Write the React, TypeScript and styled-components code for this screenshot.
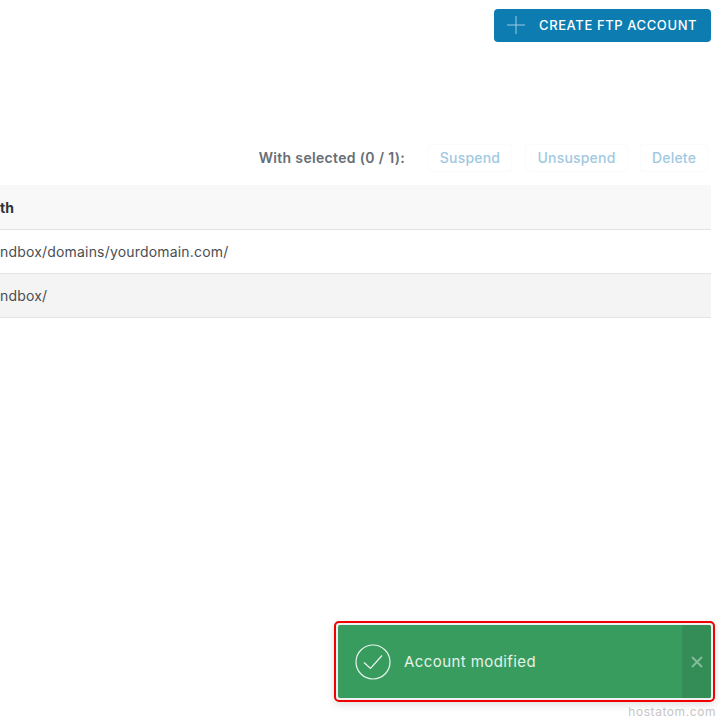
import React from "react";
import styled, { createGlobalStyle } from "styled-components";

const Global = createGlobalStyle`
  html, body { margin: 0; padding: 0; background: #fff; overflow: hidden; }
  body { font-family: Inter, "Noto Sans", "Liberation Sans", sans-serif; }
`;

const Page = styled.div`
  width: 720px;
  height: 719px;
  box-sizing: border-box;
  padding: 9px 9px 0 0;
  display: flex;
  flex-direction: column;
  overflow: hidden;
  position: relative;
`;

const TopBar = styled.div`
  display: flex;
  justify-content: flex-end;
  height: 33px;
`;

const CreateButton = styled.button`
  width: 217px;
  height: 33px;
  box-sizing: border-box;
  border: 0;
  border-radius: 4px;
  background: #0d7cb1;
  color: #fff;
  display: flex;
  align-items: center;
  padding: 0 0 1px 13px;
  gap: 14px;
  font: 500 13px Inter, sans-serif;
  letter-spacing: 0.6px;
  white-space: nowrap;
`;

const SelectionBar = styled.div`
  margin-top: 102px;
  height: 28px;
  display: flex;
  justify-content: flex-end;
  align-items: center;
  padding-right: 3px;
`;

const SelectionLabel = styled.span`
  font-size: 14px;
  font-weight: 600;
  color: #666e75;
  margin: -2px 23px 0 0;
  letter-spacing: 0.33px;
  white-space: nowrap;
`;

const ActionButton = styled.span<{ $w: number; $gap: number }>`
  width: ${(p) => p.$w}px;
  margin-left: ${(p) => p.$gap}px;
  height: 28px;
  box-sizing: border-box;
  border: 1px solid #fafbfb;
  border-radius: 4px;
  padding-bottom: 2px;
  display: flex;
  align-items: center;
  justify-content: center;
  font-size: 14px;
  font-weight: 500;
  letter-spacing: 0.2px;
  color: #9fc9e0;
`;

const Table = styled.div`
  margin-top: 13px;
  width: 711px;
`;

const Row = styled.div<{ $bg: string; $h: number }>`
  height: ${(p) => p.$h}px;
  box-sizing: border-box;
  background: ${(p) => p.$bg};
  border-bottom: 1px solid #e4e4e4;
  display: flex;
  align-items: center;
`;

const HeadCell = styled.span`
  font-size: 14px;
  font-weight: 700;
  color: #2f3336;
  white-space: nowrap;
`;

const Cell = styled.span`
  font-size: 14px;
  color: #4a4e52;
  letter-spacing: 0.18px;
  white-space: nowrap;
`;

const Toast = styled.div`
  position: absolute;
  left: 334px;
  top: 621px;
  width: 381px;
  height: 81px;
  box-sizing: border-box;
  border: 2px solid #f00000;
  border-radius: 5px;
  padding: 2px;
  background: #eef1ef;
  box-shadow: 0 3px 8px rgba(0, 0, 0, 0.12);
`;

const ToastBody = styled.div`
  height: 100%;
  display: flex;
  align-items: center;
  background: #389c5f;
  border-radius: 2px;
  overflow: hidden;
  color: #e4f2e9;
`;

const ToastIcon = styled.svg`
  width: 36px;
  height: 36px;
  margin-left: 17px;
  flex: none;
`;

const ToastText = styled.span`
  margin-left: 13px;
  flex: 1;
  font-size: 15px;
  font-weight: 400;
  letter-spacing: 0.42px;
`;

const CloseArea = styled.div`
  width: 29px;
  height: 100%;
  background: #348d57;
  display: flex;
  align-items: center;
  justify-content: center;
`;

const Watermark = styled.div`
  position: absolute;
  right: 4px;
  top: 704px;
  font-size: 12px;
  line-height: 16px;
  letter-spacing: 0.57px;
  color: #c6c6c6;
`;

export default function App() {
  return (
    <Page>
      <Global />
      <TopBar>
        <CreateButton>
          <svg width="18" height="18" viewBox="0 0 18 18" fill="none" stroke="#9fcbe2" strokeWidth="1">
            <path d="M0 9h18M9 0v18" />
          </svg>
          CREATE FTP ACCOUNT
        </CreateButton>
      </TopBar>
      <SelectionBar>
        <SelectionLabel>With selected (0 / 1):</SelectionLabel>
        <ActionButton $w={84} $gap={0}>Suspend</ActionButton>
        <ActionButton $w={103} $gap={13}>Unsuspend</ActionButton>
        <ActionButton $w={68} $gap={12}>Delete</ActionButton>
      </SelectionBar>
      <Table>
        <Row $bg="#f8f8f8" $h={45}>
          <HeadCell>th</HeadCell>
        </Row>
        <Row $bg="#ffffff" $h={44}>
          <Cell>ndbox/domains/yourdomain.com/</Cell>
        </Row>
        <Row $bg="#f4f4f4" $h={44}>
          <Cell>ndbox/</Cell>
        </Row>
      </Table>
      <Toast>
        <ToastBody>
          <ToastIcon viewBox="0 0 36 36" fill="none" stroke="#eaf5ee" strokeWidth="1.2">
            <circle cx="18" cy="18" r="17" />
            <path d="M9 18.5l6.5 6L27 11.5" />
          </ToastIcon>
          <ToastText>Account modified</ToastText>
          <CloseArea>
            <svg width="12" height="12" viewBox="0 0 12 12" fill="none" stroke="#83bd99" strokeWidth="2">
              <path d="M1 1l10 10M11 1L1 11" />
            </svg>
          </CloseArea>
        </ToastBody>
      </Toast>
      <Watermark>hostatom.com</Watermark>
    </Page>
  );
}
